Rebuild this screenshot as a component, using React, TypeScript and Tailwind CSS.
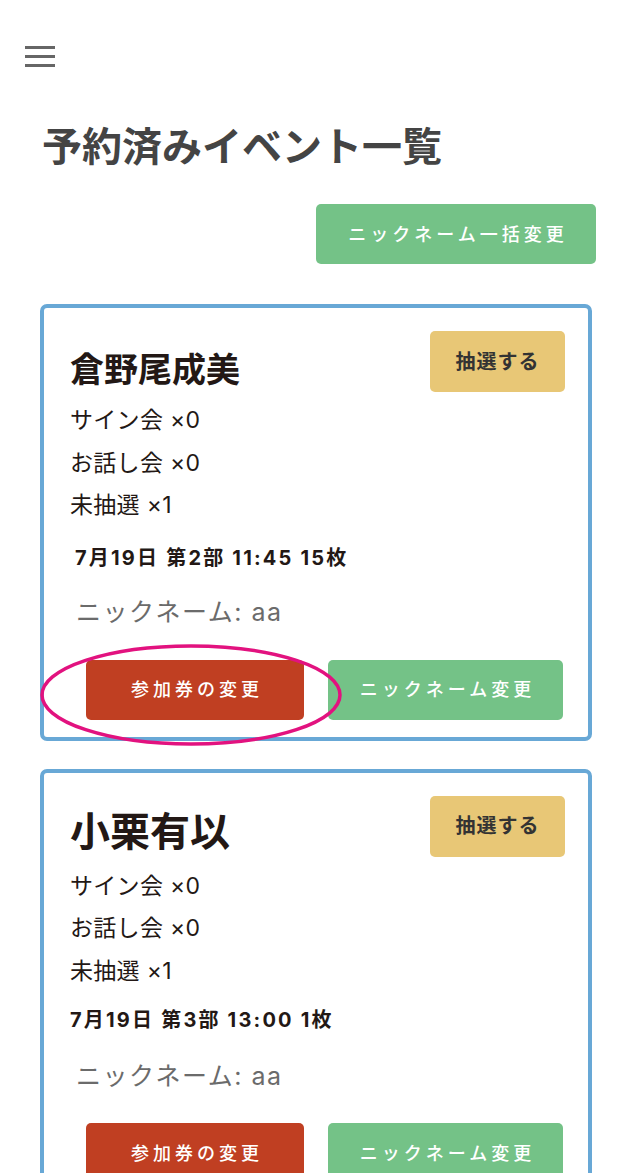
import type { ReactNode } from 'react'

type Reservation = {
  id: number
  member: string
  sign: number
  talk: number
  undrawn: number
  slot: string
  nickname: string
  highlight?: boolean
  // per-card spacing tweaks
  nameClass: string
  listClass: string
  slotClass: string
  nickClass: string
  actionsClass: string
}

const reservations: Reservation[] = [
  {
    id: 1,
    member: '倉野尾成美',
    sign: 0,
    talk: 0,
    undrawn: 1,
    slot: '7月19日 第2部 11:45 15枚',
    nickname: 'aa',
    highlight: true,
    nameClass: 'mt-[19px] text-[34px] leading-[40px] font-semibold',
    listClass: 'mt-[7px]',
    slotClass: 'mt-[16px] pl-[5px]',
    nickClass: 'mt-[21px]',
    actionsClass: 'mt-[30px]',
  },
  {
    id: 2,
    member: '小栗有以',
    sign: 0,
    talk: 0,
    undrawn: 1,
    slot: '7月19日 第3部 13:00 1枚',
    nickname: 'aa',
    nameClass: 'mt-[14px] text-[40px] leading-[44px] font-semibold',
    listClass: 'mt-[8px]',
    slotClass: 'mt-[13px]',
    nickClass: 'mt-[23px]',
    actionsClass: 'mt-[29px]',
  },
]

function ActionButton({ color, width, children }: { color: string; width: string; children: ReactNode }) {
  return (
    <button
      className={`${color} ${width} h-[60px] rounded-[5px] text-white text-[18px] font-medium tracking-[4px] pl-[4px] flex items-center justify-center`}
    >
      {children}
    </button>
  )
}

function ReservationCard({ r }: { r: Reservation }) {
  return (
    <div className="border-[4px] border-[#68a8d6] rounded-[7px] bg-white pt-[23px] pb-[17px] pl-[26px] pr-[23px] text-[#231815]">
      <div className="flex items-start justify-between">
        <h2 className={r.nameClass}>{r.member}</h2>
        <button className="w-[135px] h-[61px] rounded-[5px] bg-[#e8c776] text-[#333] text-[20px] font-bold tracking-[1px] flex items-center justify-center">
          抽選する
        </button>
      </div>

      <div className={`${r.listClass} text-[23px] leading-[42.5px] tracking-[0.3px]`}>
        <p>サイン会 ×{r.sign}</p>
        <p>お話し会 ×{r.talk}</p>
        <p>未抽選 ×{r.undrawn}</p>
      </div>

      <p className={`${r.slotClass} text-[20px] leading-[30px] font-bold tracking-[2.2px]`}>{r.slot}</p>

      <p className={`${r.nickClass} pl-[6px] text-[25px] leading-[36px] tracking-[1.5px] text-[#6b6b6b]`}>
        ニックネーム: {r.nickname}
      </p>

      <div className={`${r.actionsClass} flex gap-[24px] pl-[16px]`}>
        <div className="relative">
          <ActionButton color="bg-[#c03f22]" width="w-[218px]">
            参加券の変更
          </ActionButton>
          {r.highlight && (
            <svg
              className="absolute left-[-46px] top-[-16px] pointer-events-none"
              width="302"
              height="102"
              viewBox="0 0 302 102"
            >
              <ellipse cx="151" cy="51" rx="149" ry="49" fill="none" stroke="#e2127f" strokeWidth="3.5" />
            </svg>
          )}
        </div>
        <ActionButton color="bg-[#74c287]" width="w-[235px]">
          ニックネーム変更
        </ActionButton>
      </div>
    </div>
  )
}

export default function App() {
  return (
    <div
      className="min-h-[1173px] bg-white"
      style={{ fontFamily: 'Inter, "Noto Sans CJK JP", "Noto Sans", sans-serif' }}
    >
      <div className="pt-[46px] pl-[25px]">
        <div className="flex flex-col gap-[6px] w-[30px]">
          <span className="block h-[3px] bg-[#666]" />
          <span className="block h-[3px] bg-[#666]" />
          <span className="block h-[3px] bg-[#666]" />
        </div>
      </div>

      <div className="px-[40px]">
        <h1 className="mt-[56px] ml-[2px] text-[40px] leading-[48px] font-bold text-[#444]">予約済みイベント一覧</h1>

        <div className="mt-[33px] flex justify-end -mr-[3px]">
          <button className="w-[280px] h-[60px] rounded-[5px] bg-[#74c287] text-white text-[18px] font-medium tracking-[4px] pl-[4px] flex items-center justify-center">
            ニックネーム一括変更
          </button>
        </div>

        <div className="mt-[40px] flex flex-col gap-[28px] pr-[1px]">
          {reservations.map((r) => (
            <ReservationCard key={r.id} r={r} />
          ))}
        </div>
      </div>
    </div>
  )
}
